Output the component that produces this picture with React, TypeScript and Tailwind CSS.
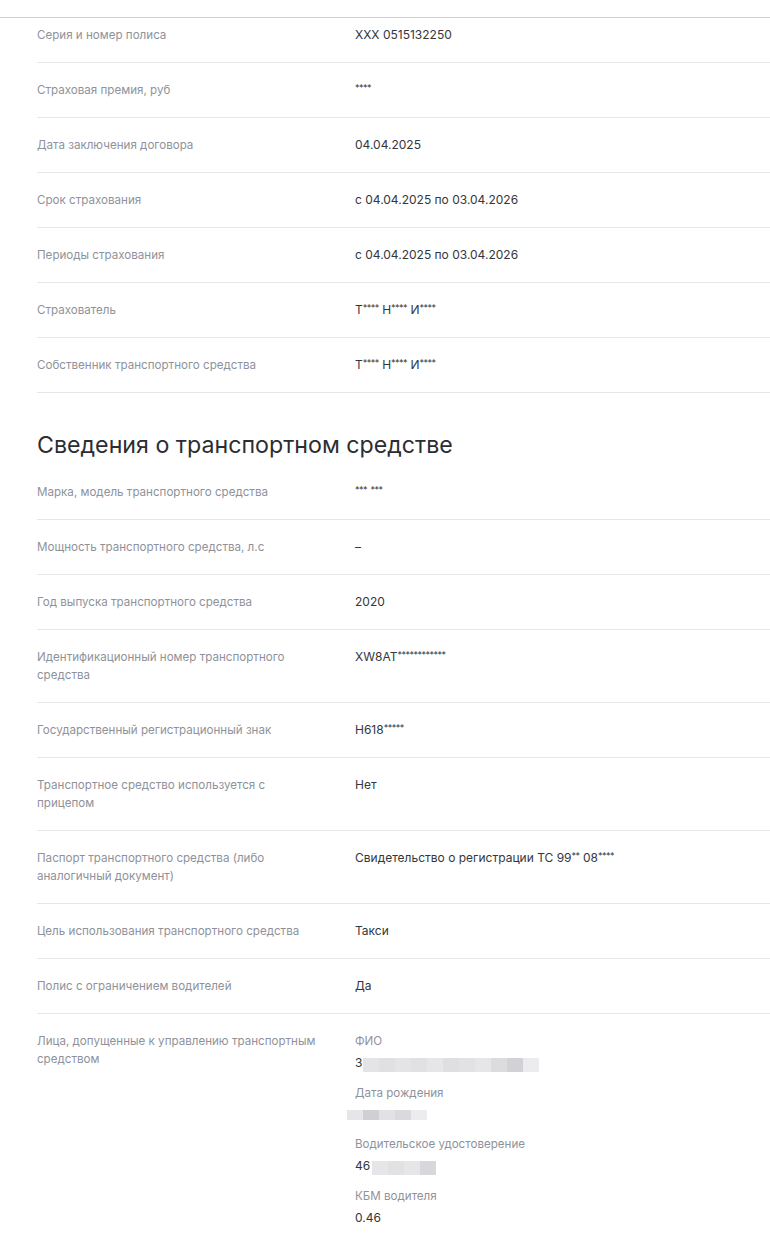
import React from "react";

type Row = { label: string; value: string };

const policy: Row[] = [
  { label: "Серия и номер полиса", value: "XXX 0515132250" },
  { label: "Страховая премия, руб", value: "****" },
  { label: "Дата заключения договора", value: "04.04.2025" },
  { label: "Срок страхования", value: "с 04.04.2025 по 03.04.2026" },
  { label: "Периоды страхования", value: "с 04.04.2025 по 03.04.2026" },
  { label: "Страхователь", value: "Т**** Н**** И****" },
  { label: "Собственник транспортного средства", value: "Т**** Н**** И****" },
];

const vehicle: Row[] = [
  { label: "Марка, модель транспортного средства", value: "*** ***" },
  { label: "Мощность транспортного средства, л.с", value: "–" },
  { label: "Год выпуска транспортного средства", value: "2020" },
  { label: "Идентификационный номер транспортного средства", value: "XW8AT************" },
  { label: "Государственный регистрационный знак", value: "Н618*****" },
  { label: "Транспортное средство используется с прицепом", value: "Нет" },
  { label: "Паспорт транспортного средства (либо аналогичный документ)", value: "Свидетельство о регистрации ТС 99** 08****" },
  { label: "Цель использования транспортного средства", value: "Такси" },
  { label: "Полис с ограничением водителей", value: "Да" },
];

function Masked({ text }: { text: string }) {
  const parts = text.split(/(\*+)/);
  return (
    <>
      {parts.map((p, i) =>
        p.startsWith("*") ? (
          <span key={i} className="relative top-[-3px] text-[9px] leading-[0] tracking-[-0.5px]">
            {p}
          </span>
        ) : (
          <React.Fragment key={i}>{p}</React.Fragment>
        )
      )}
    </>
  );
}

function Blur({ shades, h, w }: { shades: string[]; h: number; w: number }) {
  return (
    <div className="flex" style={{ height: h }}>
      {shades.map((c, i) => (
        <div key={i} style={{ width: w, height: h, background: c }} />
      ))}
    </div>
  );
}

const labelCls = "w-[318px] shrink-0 pr-[36px] text-[11.6px] leading-[18px] text-[#8f929b]";
const valueCls = "text-[12px] leading-[18px] text-[#34363b]";

function RowView({ row, first }: { row: Row; first?: boolean }) {
  return (
    <div className={`flex border-b border-[#e6e7eb] pb-[18px] ${first ? "pt-[8px]" : "pt-[18px]"}`}>
      <div className={labelCls}>{row.label}</div>
      <div className={`${valueCls} h-[18px]`}>
        <Masked text={row.value} />
      </div>
    </div>
  );
}

export default function App() {
  return (
    <div className="min-h-[1233px] bg-white pt-[17px]" style={{ fontFamily: "Inter, 'Noto Sans', sans-serif" }}>
      <div className="border-t border-[#cfd0d4]">
        <div className="pl-[37px]">
          {policy.map((r, i) => (
            <RowView key={r.label} row={r} first={i === 0} />
          ))}
          <h2 className="mt-[36px] mb-[4px] text-[23.2px] leading-[32px] font-normal text-[#2b2d33]">
            Сведения о транспортном средстве
          </h2>
          {vehicle.map((r) => (
            <RowView key={r.label} row={r} />
          ))}
          <div className="flex pt-[18px] pb-[18px]">
            <div className={labelCls}>Лица, допущенные к управлению транспортным средством</div>
            <div className="flex flex-col gap-[11.5px]">
              <div>
                <div className="text-[11.6px] leading-[18px] text-[#8f929b]">ФИО</div>
                <div className={`mt-[4px] flex h-[18px] items-center ${valueCls}`}>
                  <span>З</span>
                  <div className="ml-[1px] mt-[4px]">
                    <Blur h={14} w={16} shades={["#e4e4e7", "#e0e0e3", "#e4e4e7", "#e1e1e4", "#e6e6e9", "#dfdfe2", "#e2e2e5", "#e6e6e9", "#dcdcdf", "#d2d2d6", "#ececef"]} />
                  </div>
                </div>
              </div>
              <div>
                <div className="text-[11.6px] leading-[18px] text-[#8f929b]">Дата рождения</div>
                <div className="mt-[4px] flex h-[18px] items-center">
                  <div className="-ml-[8px]">
                    <Blur h={10} w={16} shades={["#e6e6e9", "#cfcfd4", "#e2e2e5", "#dadade", "#ececef"]} />
                  </div>
                </div>
              </div>
              <div>
                <div className="text-[11.6px] leading-[18px] text-[#8f929b]">Водительское удостоверение</div>
                <div className={`mt-[4px] flex h-[18px] items-center ${valueCls}`}>
                  <span>46</span>
                  <div className="ml-[2px] mt-[3px]">
                    <Blur h={14} w={16} shades={["#e6e6e9", "#e2e2e5", "#e6e6e9", "#d8d8dc"]} />
                  </div>
                </div>
              </div>
              <div>
                <div className="text-[11.6px] leading-[18px] text-[#8f929b]">КБМ водителя</div>
                <div className={`mt-[4px] ${valueCls}`}>0.46</div>
              </div>
            </div>
          </div>
        </div>
      </div>
    </div>
  );
}
